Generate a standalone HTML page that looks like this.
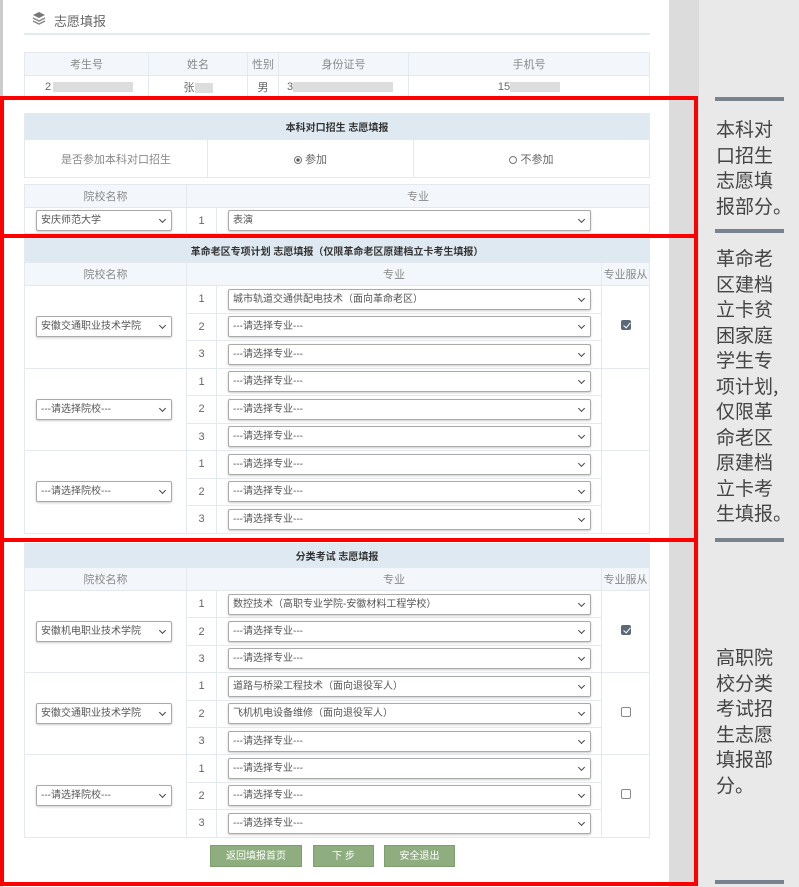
<!DOCTYPE html>
<html><head><meta charset="utf-8">
<style>
*{box-sizing:border-box;margin:0;padding:0}
body{width:799px;height:887px;position:relative;background:#e9e9e9;font-family:"Liberation Sans","Noto Sans CJK SC",sans-serif;color:#555;overflow:hidden}
.page{position:absolute;left:0;top:0;width:669px;height:887px;background:#fff;border-left:3px solid #ccc}
.strip{position:absolute;left:669px;top:0;width:30px;height:887px;background:#dcdcdc}
table{position:absolute;border-collapse:collapse;font-size:11px;table-layout:fixed}
td{border:1px solid #e3e9ef;text-align:center;color:#666;padding:0}
.hd td{background:#f3f7fb;color:#888}
.tt td{background:#dfe9f2;color:#333;font-weight:bold;font-size:10px}
.sel{position:relative;height:21px;border:1px solid #aaa;border-radius:2px;box-shadow:0 1px 2px #ccc;text-align:left;font-size:10px;line-height:19px;padding-left:4px;color:#555;background:#fff;white-space:nowrap;overflow:hidden}
.sel:after{content:"";position:absolute;right:6px;top:6px;width:4px;height:4px;border-right:1.5px solid #444;border-bottom:1.5px solid #444;transform:rotate(45deg)}
.red{position:absolute;border:4px solid #f00}
.side{position:absolute;left:716px;font-size:19px;line-height:25.5px;color:#444;white-space:nowrap;font-family:"Noto Sans CJK SC",sans-serif}
.bar{position:absolute;left:715px;width:69px;height:4px;background:#78838e}
.cb{display:inline-block;width:10px;height:10px;border:1px solid #888;border-radius:2px;background:#fff;position:relative}
.cb.on{background:#5a6a7a;border-color:#5a6a7a}
.cb.on:after{content:"";position:absolute;left:3px;top:0px;width:3px;height:6px;border-right:1.5px solid #fff;border-bottom:1.5px solid #fff;transform:rotate(40deg)}
.btn{position:absolute;top:845px;height:22px;background:#8fae7f;color:#fff;font-size:10px;text-align:center;line-height:22px;border:1px solid #7f9d70}
</style></head><body>
<div class="page"></div>
<div class="strip"></div>
<div style="position:absolute;left:32px;top:11px;width:14px;height:14px">
<svg width="14" height="14" viewBox="0 0 14 14"><path d="M7 1L13 4L7 7L1 4Z" fill="#777"/><path d="M1 7L7 10L13 7M1 10L7 13L13 10" stroke="#888" stroke-width="1.5" fill="none"/></svg></div>
<div style="position:absolute;left:54px;top:11px;font-size:13px;color:#666">志愿填报</div>
<div style="position:absolute;left:24px;top:33px;width:626px;height:2px;background:#e2ebf3"></div>

<table style="left:24px;top:52px;width:626px">
<colgroup><col style="width:124px"><col style="width:99px"><col style="width:31px"><col style="width:130px"><col></colgroup>
<tr class="hd" style="height:23px"><td>考生号</td><td>姓名</td><td>性别</td><td>身份证号</td><td>手机号</td></tr>
<tr style="height:22px"><td style="text-align:left;padding-left:20px">2<span style="display:inline-block;width:80px;height:10px;background:#ddd;vertical-align:middle;margin-left:2px"></span></td><td>张<span style="display:inline-block;width:18px;height:10px;background:#ddd;vertical-align:middle"></span></td><td>男</td><td style="text-align:left;padding-left:8px">3<span style="display:inline-block;width:100px;height:10px;background:#ddd;vertical-align:middle"></span></td><td>15<span style="display:inline-block;width:50px;height:10px;background:#ddd;vertical-align:middle"></span></td></tr>
</table>

<table style="left:24px;top:113px;width:626px">
<colgroup><col style="width:183px"><col style="width:206px"><col></colgroup>
<tr class="tt" style="height:26px"><td colspan="3">本科对口招生 志愿填报</td></tr>
<tr style="height:38px"><td style="color:#888">是否参加本科对口招生</td><td><span style="display:inline-block;width:8px;height:8px;border:1px solid #777;border-radius:50%;background:radial-gradient(#555 35%,#fff 45%);vertical-align:middle"></span> 参加</td><td><span style="display:inline-block;width:8px;height:8px;border:1px solid #777;border-radius:50%;vertical-align:middle"></span> 不参加</td></tr>
</table>
<table style="left:24px;top:184px;width:626px">
<colgroup><col style="width:162px"><col style="width:30px"><col></colgroup>
<tr class="hd" style="height:23px"><td>院校名称</td><td colspan="2">专业</td></tr>
<tr style="height:26px"><td><div class="sel" style="margin-left:11px;width:136px">安庆师范大学</div></td><td>1</td><td><div class="sel" style="margin-left:11px;width:363px">表演</div></td></tr>
</table>

<table style="left:24px;top:237px;width:626px">
<colgroup><col style="width:162px"><col style="width:30px"><col style="width:385px"><col></colgroup>
<tr class="tt" style="height:25px"><td colspan="4">革命老区专项计划 志愿填报（仅限革命老区原建档立卡考生填报）</td></tr>
<tr class="hd" style="height:23px"><td>院校名称</td><td colspan="2">专业</td><td>专业服从</td></tr>
<tr style="height:27.5px"><td rowspan="3"><div class="sel" style="margin-left:11px;width:136px">安徽交通职业技术学院</div></td><td>1</td><td><div class="sel" style="margin-left:11px;width:363px">城市轨道交通供配电技术（面向革命老区）</div></td><td rowspan="3"><span class="cb on"></span></td></tr>
<tr style="height:27.5px"><td>2</td><td><div class="sel" style="margin-left:11px;width:363px">---请选择专业---</div></td></tr>
<tr style="height:27.5px"><td>3</td><td><div class="sel" style="margin-left:11px;width:363px">---请选择专业---</div></td></tr>
<tr style="height:27.5px"><td rowspan="3"><div class="sel" style="margin-left:11px;width:136px">---请选择院校---</div></td><td>1</td><td><div class="sel" style="margin-left:11px;width:363px">---请选择专业---</div></td><td rowspan="3"></td></tr>
<tr style="height:27.5px"><td>2</td><td><div class="sel" style="margin-left:11px;width:363px">---请选择专业---</div></td></tr>
<tr style="height:27.5px"><td>3</td><td><div class="sel" style="margin-left:11px;width:363px">---请选择专业---</div></td></tr>
<tr style="height:27.5px"><td rowspan="3"><div class="sel" style="margin-left:11px;width:136px">---请选择院校---</div></td><td>1</td><td><div class="sel" style="margin-left:11px;width:363px">---请选择专业---</div></td><td rowspan="3"></td></tr>
<tr style="height:27.5px"><td>2</td><td><div class="sel" style="margin-left:11px;width:363px">---请选择专业---</div></td></tr>
<tr style="height:27.5px"><td>3</td><td><div class="sel" style="margin-left:11px;width:363px">---请选择专业---</div></td></tr>
</table>

<table style="left:24px;top:543px;width:626px">
<colgroup><col style="width:162px"><col style="width:30px"><col style="width:385px"><col></colgroup>
<tr class="tt" style="height:24px"><td colspan="4">分类考试 志愿填报</td></tr>
<tr class="hd" style="height:23px"><td>院校名称</td><td colspan="2">专业</td><td>专业服从</td></tr>
<tr style="height:27.4px"><td rowspan="3"><div class="sel" style="margin-left:11px;width:136px">安徽机电职业技术学院</div></td><td>1</td><td><div class="sel" style="margin-left:11px;width:363px">数控技术（高职专业学院-安徽材料工程学校）</div></td><td rowspan="3"><span class="cb on"></span></td></tr>
<tr style="height:27.4px"><td>2</td><td><div class="sel" style="margin-left:11px;width:363px">---请选择专业---</div></td></tr>
<tr style="height:27.4px"><td>3</td><td><div class="sel" style="margin-left:11px;width:363px">---请选择专业---</div></td></tr>
<tr style="height:27.4px"><td rowspan="3"><div class="sel" style="margin-left:11px;width:136px">安徽交通职业技术学院</div></td><td>1</td><td><div class="sel" style="margin-left:11px;width:363px">道路与桥梁工程技术（面向退役军人）</div></td><td rowspan="3"><span class="cb"></span></td></tr>
<tr style="height:27.4px"><td>2</td><td><div class="sel" style="margin-left:11px;width:363px">飞机机电设备维修（面向退役军人）</div></td></tr>
<tr style="height:27.4px"><td>3</td><td><div class="sel" style="margin-left:11px;width:363px">---请选择专业---</div></td></tr>
<tr style="height:27.4px"><td rowspan="3"><div class="sel" style="margin-left:11px;width:136px">---请选择院校---</div></td><td>1</td><td><div class="sel" style="margin-left:11px;width:363px">---请选择专业---</div></td><td rowspan="3"><span class="cb"></span></td></tr>
<tr style="height:27.4px"><td>2</td><td><div class="sel" style="margin-left:11px;width:363px">---请选择专业---</div></td></tr>
<tr style="height:27.4px"><td>3</td><td><div class="sel" style="margin-left:11px;width:363px">---请选择专业---</div></td></tr>
</table>

<div class="btn" style="left:210px;width:92px">返回填报首页</div>
<div class="btn" style="left:313px;width:61px">下 步</div>
<div class="btn" style="left:384px;width:71px">安全退出</div>

<div class="red" style="left:0px;top:96px;width:698px;height:142px"></div>
<div class="red" style="left:0px;top:234px;width:698px;height:308px"></div>
<div class="red" style="left:0px;top:538px;width:698px;height:348px"></div>

<div class="bar" style="top:97px"></div>
<div class="side" style="top:116px">本科对<br>口招生<br>志愿填<br>报部分。</div>
<div class="bar" style="top:229px"></div>
<div class="side" style="top:245px">革命老<br>区建档<br>立卡贫<br>困家庭<br>学生专<br>项计划,<br>仅限革<br>命老区<br>原建档<br>立卡考<br>生填报。</div>
<div class="bar" style="top:538px"></div>
<div class="side" style="top:644px">高职院<br>校分类<br>考试招<br>生志愿<br>填报部<br>分。</div>
<div class="bar" style="top:880px"></div>
</body></html>
